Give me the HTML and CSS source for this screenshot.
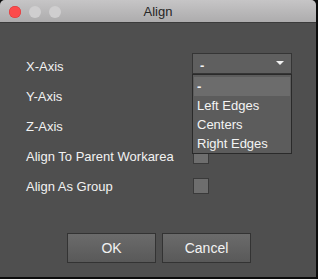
FILE: index.html
```html
<!DOCTYPE html>
<html>
<head>
<meta charset="utf-8">
<link rel="stylesheet" href="styles.css">
</head>
<body>
<div class="window">
  <div class="titlebar">
    <div class="lights">
      <span class="light red"></span>
      <span class="light grey"></span>
      <span class="light grey"></span>
    </div>
    <div class="title">Align</div>
  </div>
  <div class="content">
    <div class="form">
      <div class="label">X-Axis</div>
      <div class="field">
        <div class="select">
          <span class="select-value">-</span>
          <svg class="caret" width="8" height="4" viewBox="0 0 8 4"><path d="M0 0 H8 L4 4 Z" fill="#f2f2f2"/></svg>
          <div class="menu">
            <div class="item active">-</div>
            <div class="item">Left Edges</div>
            <div class="item">Centers</div>
            <div class="item">Right Edges</div>
          </div>
        </div>
      </div>
      <div class="label">Y-Axis</div>
      <div class="field"></div>
      <div class="label">Z-Axis</div>
      <div class="field"></div>
      <div class="label">Align To Parent Workarea</div>
      <div class="field"><span class="check"></span></div>
      <div class="label">Align As Group</div>
      <div class="field"><span class="check"></span></div>
    </div>
    <div class="buttons">
      <button class="btn">OK</button>
      <button class="btn">Cancel</button>
    </div>
  </div>
</div>
</body>
</html>
```
FILE: styles.css
```css
html, body {
  margin: 0;
  padding: 0;
  background: #0c0c0c;
  width: 318px;
  height: 279px;
  overflow: hidden;
}
.window {
  width: 316px;
  height: 277px;
  background: #4f4f4f;
  border-radius: 5px 5px 0 0;
  overflow: hidden;
  display: flex;
  flex-direction: column;
  font-family: "Liberation Sans", Arial, sans-serif;
}
.titlebar {
  height: 22px;
  flex: none;
  background: linear-gradient(#c6c5c6, #adacad);
  border-bottom: 1px solid #3b3b3b;
  position: relative;
  display: flex;
  align-items: center;
  justify-content: center;
}
.lights {
  position: absolute;
  left: 9px;
  top: 6px;
  display: flex;
  gap: 8px;
}
.light {
  width: 12px;
  height: 12px;
  border-radius: 50%;
}
.light.red {
  background: #fc4b4b;
  box-shadow: inset 0 0 0 0.5px #d8383a;
}
.light.grey {
  background: #cfcecf;
}
.title {
  font-size: 13px;
  color: #262626;
  padding-top: 1px;
}
.content {
  flex: 1;
  display: flex;
  flex-direction: column;
  padding: 28px 0 0 26px;
}
.form {
  display: grid;
  grid-template-columns: 166px 100px;
  grid-auto-rows: 30px;
}
.label {
  font-size: 13px;
  color: #f2f2f2;
  display: flex;
  align-items: center;
  white-space: nowrap;
}
.field {
  display: flex;
  align-items: center;
}
.select {
  position: relative;
  align-self: flex-start;
  margin-top: 2px;
  width: 100px;
  height: 21px;
  box-sizing: border-box;
  border: 1px solid #353535;
  background: #5f5f5f;
  display: flex;
  align-items: center;
  justify-content: space-between;
  padding: 0 7px 0 7px;
  color: #f2f2f2;
  font-size: 13px;
}
.select-value {
  font-weight: bold;
  padding-top: 4px;
}
.caret {
  margin-top: -2px;
}
.menu {
  position: absolute;
  left: -1px;
  top: 20px;
  width: 100px;
  box-sizing: border-box;
  border: 1px solid #2a2a2a;
  background: #5c5c5c;
  padding: 2px 1px 0;
  z-index: 2;
}
.item {
  height: 19px;
  line-height: 19px;
  padding-left: 3px;
  font-size: 13px;
  color: #f4f4f4;
}
.item.active {
  background: #6c6c6c;
  font-weight: bold;
}
.check {
  width: 16px;
  height: 16px;
  box-sizing: border-box;
  margin-left: 1px;
  background: #6e6e6e;
  border: 1px solid #3a3a3a;
}
.buttons {
  display: flex;
  gap: 6px;
  padding: 32px 0 0 41px;
}
.btn {
  width: 89px;
  height: 30px;
  border: 1px solid #333;
  background: linear-gradient(#6b6b6b, #595959);
  color: #f2f2f2;
  font-family: "Liberation Sans", Arial, sans-serif;
  font-size: 14px;
  padding: 0;
}
```
